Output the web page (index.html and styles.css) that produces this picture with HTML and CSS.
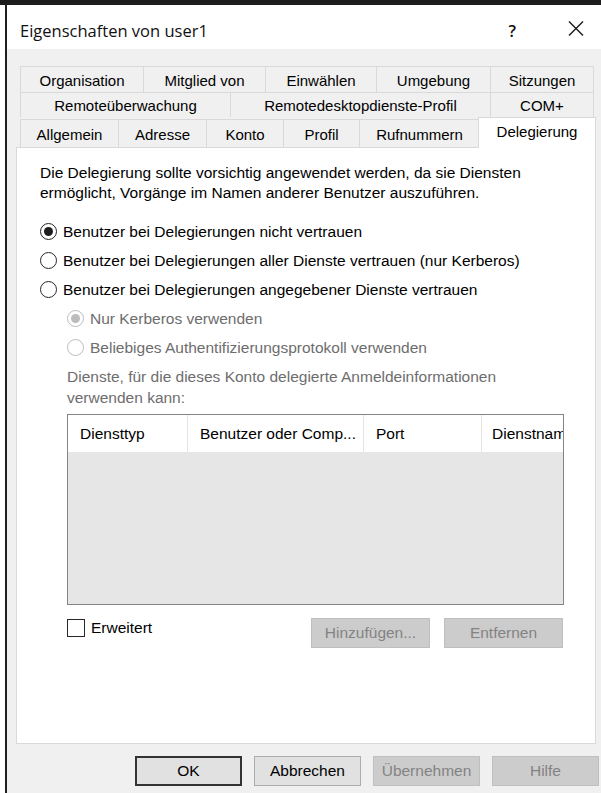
FILE: index.html
```html
<!DOCTYPE html>
<html lang="de">
<head>
<meta charset="utf-8">
<title>Eigenschaften von user1</title>
<link rel="stylesheet" href="styles.css">
</head>
<body>
<div class="topbar"></div>
<div class="window">
  <header class="titlebar">
    <span class="title">Eigenschaften von user1</span>
    <span class="help">?</span>
    <span class="close">
      <svg width="16" height="15" viewBox="0 0 16 15"><path d="M1 0.5 L15 14.5 M15 0.5 L1 14.5" stroke="#1a1a1a" stroke-width="1.4" fill="none"/></svg>
    </span>
  </header>

  <div class="dialog">
    <nav class="tabs">
      <div class="tabrow row1">
        <div class="tab">Organisation</div>
        <div class="tab">Mitglied von</div>
        <div class="tab">Einwählen</div>
        <div class="tab">Umgebung</div>
        <div class="tab">Sitzungen</div>
      </div>
      <div class="tabrow row2">
        <div class="tab">Remoteüberwachung</div>
        <div class="tab">Remotedesktopdienste-Profil</div>
        <div class="tab">COM+</div>
      </div>
      <div class="tabrow row3">
        <div class="tab">Allgemein</div>
        <div class="tab">Adresse</div>
        <div class="tab">Konto</div>
        <div class="tab">Profil</div>
        <div class="tab">Rufnummern</div>
        <div class="tab selected">Delegierung</div>
      </div>
    </nav>

    <section class="panel">
      <p class="intro">Die Delegierung sollte vorsichtig angewendet werden, da sie Diensten ermöglicht, Vorgänge im Namen anderer Benutzer auszuführen.</p>

      <div class="options">
        <div class="option"><span class="radio checked"></span><span>Benutzer bei Delegierungen nicht vertrauen</span></div>
        <div class="option"><span class="radio"></span><span>Benutzer bei Delegierungen aller Dienste vertrauen (nur Kerberos)</span></div>
        <div class="option"><span class="radio"></span><span>Benutzer bei Delegierungen angegebener Dienste vertrauen</span></div>
      </div>

      <div class="services">
        <div class="option sub disabled"><span class="radio checked"></span><span>Nur Kerberos verwenden</span></div>
        <div class="option sub disabled"><span class="radio"></span><span>Beliebiges Authentifizierungsprotokoll verwenden</span></div>

        <p class="caption">Dienste, für die dieses Konto delegierte Anmeldeinformationen verwenden kann:</p>

        <div class="listview">
          <div class="lv-head">
            <div class="col c1">Diensttyp</div>
            <div class="col c2">Benutzer oder Comp...</div>
            <div class="col c3">Port</div>
            <div class="col c4">Dienstname</div>
          </div>
          <div class="lv-body"></div>
        </div>

        <div class="listbar">
          <label class="check"><span class="box"></span><span>Erweitert</span></label>
          <div class="listbtns">
            <span class="btn disabled">Hinzufügen...</span>
            <span class="btn disabled">Entfernen</span>
          </div>
        </div>
      </div>
    </section>

    <div class="actions">
      <span class="btn default">OK</span>
      <span class="btn">Abbrechen</span>
      <span class="btn disabled">Übernehmen</span>
      <span class="btn disabled">Hilfe</span>
    </div>
  </div>
</div>
</body>
</html>
```

FILE: styles.css
```css
* {
  box-sizing: border-box;
}

html, body {
  margin: 0;
  padding: 0;
  background: #ffffff;
  height: 100%;
  overflow: hidden;
}

body {
  font-family: "Liberation Sans", Arial, sans-serif;
  font-size: 15.5px;
  color: #000;
}

/* dark strip of the window behind */
.topbar {
  height: 5px;
  background: #1c1c1c;
}

.window {
  margin-left: 5px;
  border-left: 2px solid #1f1f1f;
  height: 788px;
  background: #f0f0f0;
}

/* caption bar */
.titlebar {
  height: 44px;
  background: #ffffff;
  display: flex;
  align-items: center;
  padding: 0 17px 0 13px;
}

.title {
  font-family: "Open Sans", "Noto Sans", sans-serif;
  font-size: 16.5px;
  color: #111;
  flex: 1;
  margin-top: 6px;
}

.help {
  font-family: "Open Sans", "Noto Sans", sans-serif;
  font-size: 16.5px;
  font-weight: 600;
  color: #111;
  margin-right: 52px;
  margin-top: 6px;
}

.close {
  display: flex;
  margin-top: 3px;
}

/* dialog body */
.dialog {
  padding: 17px 0 0 9px;
}

.tabs {
  padding-left: 4px;
  font-size: 15px;
}

.tabrow {
  display: grid;
}

.row1 {
  grid-template-columns: 124px 122px 111px 114px 103px;
  height: 26px;
}

.row2 {
  grid-template-columns: 211px 260px 103px;
  height: 25px;
}

.row3 {
  grid-template-columns: 99px 88px 77px 76px 120px 116px;
  height: 30px;
  align-items: end;
}

.tab {
  border-top: 1px solid #d9d9d9;
  border-right: 1px solid #d9d9d9;
  background: #f0f0f0;
  display: flex;
  align-items: center;
  justify-content: center;
  white-space: nowrap;
  height: 100%;
  padding-top: 1px;
}

.tab:first-child {
  border-left: 1px solid #d9d9d9;
}

.row3 .tab {
  height: 28px;
}

.row3 .tab.selected {
  height: 31px;
  margin-bottom: -1px;
  background: #ffffff;
  border-left: 1px solid #d9d9d9;
  margin-left: -2px;
  padding-top: 0;
  padding-bottom: 4px;
  position: relative;
  z-index: 1;
}

/* tab page */
.panel {
  width: 580px;
  height: 597px;
  background: #ffffff;
  border: 1px solid #d9d9d9;
  padding: 15px 0 0 23px;
}

.intro {
  margin: 0;
  width: 505px;
  line-height: 20px;
}

.options {
  margin-top: 14px;
}

.option {
  display: flex;
  align-items: center;
  height: 29px;
  white-space: nowrap;
}

.radio {
  width: 17px;
  height: 17px;
  border: 1.4px solid #262626;
  border-radius: 50%;
  margin-right: 6px;
  display: flex;
  align-items: center;
  justify-content: center;
  flex: none;
}

.radio.checked::after {
  content: "";
  width: 9px;
  height: 9px;
  border-radius: 50%;
  background: #1e1e1e;
}

.services {
  padding-left: 27px;
}

.option.disabled {
  color: #6d6d6d;
}

.option.disabled .radio {
  border-color: #bcbcbc;
}

.option.disabled .radio.checked::after {
  background: #bcbcbc;
}

.caption {
  margin: 4px 0 0;
  width: 480px;
  line-height: 21px;
  color: #6d6d6d;
}

/* list of services */
.listview {
  margin-top: 6px;
  width: 497px;
  height: 191px;
  border: 1px solid #858585;
  display: flex;
  flex-direction: column;
}

.lv-head {
  display: grid;
  grid-template-columns: 120px 176px 118px 1fr;
  height: 37px;
  background: #ffffff;
}

.col {
  display: flex;
  align-items: center;
  padding-left: 12px;
  border-right: 1px solid #e5e5e5;
  white-space: nowrap;
  overflow: hidden;
}

.col.c4 {
  border-right: none;
  padding-left: 10px;
}

.lv-body {
  flex: 1;
  background: #e6e6e6;
}

.listbar {
  margin-top: 13px;
  width: 497px;
  display: flex;
  justify-content: space-between;
  align-items: flex-start;
}

.check {
  display: flex;
  align-items: center;
  margin-top: 1px;
}

.box {
  width: 18px;
  height: 18px;
  border: 1.4px solid #262626;
  background: #fff;
  margin-right: 6px;
}

.listbtns {
  display: flex;
  gap: 14px;
  margin-right: 1px;
}

/* push buttons */
.btn {
  width: 119px;
  height: 30px;
  display: flex;
  align-items: center;
  justify-content: center;
  background: #e1e1e1;
  border: 1px solid #adadad;
  white-space: nowrap;
}

.btn.disabled {
  background: #cccccc;
  border-color: #bfbfbf;
  color: #838383;
}

.btn.default {
  border: 2px solid #333333;
}

.actions {
  display: flex;
  gap: 12px;
  margin-top: 12px;
  padding-left: 119px;
}

.actions .btn {
  width: 107px;
}
```
